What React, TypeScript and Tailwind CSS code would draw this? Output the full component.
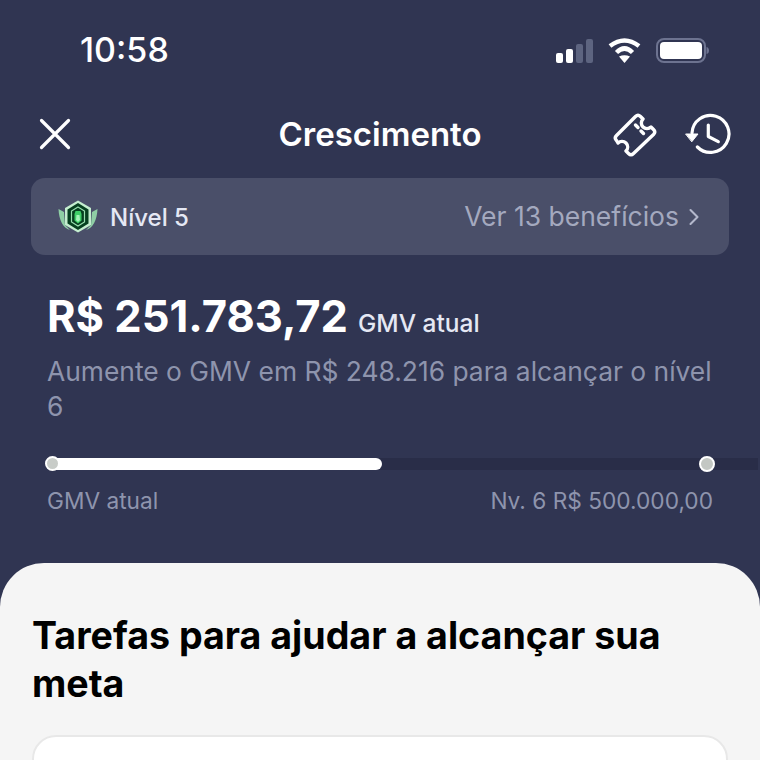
import React from 'react';
import { ChevronRight } from 'lucide-react';

const StatusIcons: React.FC = () => (
  <div className="flex items-center gap-[15px]">
    <svg width="37" height="25" viewBox="0 0 37 25">
      <rect x="0" y="15" width="7" height="10" rx="2" fill="#ffffff" />
      <rect x="10" y="11" width="7" height="14" rx="2" fill="#ffffff" />
      <rect x="20" y="6" width="7" height="19" rx="2" fill="#5d6480" />
      <rect x="30" y="1" width="7" height="24" rx="2" fill="#5d6480" />
    </svg>
    <svg width="33" height="25" viewBox="0 0 33 25" fill="none">
      <path d="M2 8Q16.500 -3 31 8" stroke="#fff" strokeWidth="4.500" />
      <path d="M8.500 14.500Q16.500 6.500 24.500 14.500" stroke="#fff" strokeWidth="4.500" />
      <path d="M11 18.500Q16.500 16 22 18.500L16.500 25Z" fill="#fff" />
    </svg>
    <svg width="53" height="25" viewBox="0 0 53 25" fill="none">
      <rect x="1" y="1" width="48" height="23" rx="7" stroke="#6d7390" strokeWidth="2" />
      <rect x="4" y="4" width="42" height="17" rx="4" fill="#fff" />
      <path d="M50.500 9C52.500 9.500 53 11 53 12.500S52.500 15.500 50.500 16Z" fill="#6d7390" />
    </svg>
  </div>
);

const CloseIcon: React.FC = () => (
  <svg width="32" height="32" viewBox="0 0 32 32" fill="none" stroke="#fff" strokeWidth="3.2" strokeLinecap="round">
    <path d="M2.500 2.500L29.500 29.500M29.500 2.500L2.500 29.500" />
  </svg>
);

const TicketIcon: React.FC = () => (
  <svg width="45" height="45" viewBox="0 0 45 45" fill="none" stroke="#fff" strokeWidth="3.4" strokeLinejoin="round" strokeLinecap="round">
    <path d="M22.500 4.500Q25 2 27.500 4.500L30 7A5.500 5.500 0 0 0 38 15L40.500 17.500Q43 20 40.500 22.500L20.500 41.500Q18 44 15.500 41.500L13 39A5.500 5.500 0 0 0 5 31L3.500 28.500Q1 26 3.500 23.500Z" />
    <path d="M22.500 13L25 15.500M28 19L30.500 21.500" />
  </svg>
);

const HistoryIcon: React.FC = () => (
  <svg width="46" height="44" viewBox="0 0 46 44" fill="none" stroke="#fff" strokeWidth="3.2" strokeLinecap="round" strokeLinejoin="round">
    <path d="M7 21A18.500 18.500 0 1 1 12.400 35" />
    <path d="M23.300 13V24.500L33.300 29.700" />
    <path d="M1 22H13L7 29.500Z" fill="#fff" strokeWidth="1" />
  </svg>
);

const LevelBadge: React.FC = () => (
  <svg width="40" height="34" viewBox="0 0 40 34">
    <path d="M0.500 9L6 12L7 25L12 30C5 28 1 20 0.500 9Z" fill="#8fcfa5" />
    <path d="M39.500 9L34 12L33 25L28 30C35 28 39 20 39.500 9Z" fill="#8fcfa5" />
    <path d="M20 .5L33 8V25L20 32.500L7 25V8Z" fill="#c4eecf" />
    <path d="M20 3L30.500 9.500V23.500L20 30L9.500 23.500V9.500Z" fill="#06401f" />
    <path d="M20 7L26.500 11V22L20 26L13.500 22V11Z" fill="none" stroke="#9adfb0" strokeWidth="1.2" />
    <path d="M17.500 11H22.500L23.500 14V20.500L20 23.500L16.500 20.500V14Z" fill="#3fcf68" />
    <path d="M18.500 15H21.500L22 20L20 22L18 20Z" fill="#a4f5b8" />
  </svg>
);

const App: React.FC = () => {
  return (
    <div className="h-[760px] w-[760px] overflow-hidden bg-[#303552] font-['Inter','Liberation_Sans',sans-serif] text-white">
      <div className="flex h-[100px] items-center justify-between pl-[80px] pr-[51px]">
        <span className="text-[34px] font-medium leading-none">10:58</span>
        <StatusIcons />
      </div>

      <div className="flex h-[68px] items-center justify-between pl-[39px] pr-[29px]">
        <CloseIcon />
        <h1 className="pl-[76px] text-[33px] font-semibold leading-none">Crescimento</h1>
        <div className="flex items-center gap-[27px]">
          <TicketIcon />
          <HistoryIcon />
        </div>
      </div>

      <div className="mx-[31px] mt-[10px] flex h-[77px] items-center justify-between rounded-[14px] bg-[#4a4f69] pl-[27px] pr-[20px]">
        <div className="flex items-center gap-[12px]">
          <LevelBadge />
          <span className="pt-[2px] text-[24px] font-medium leading-none text-[#e5e8f4]">Nível 5</span>
        </div>
        <div className="flex items-center text-[#a4a9bf]">
          <span className="text-[26.5px] leading-none">Ver 13 benefícios</span>
          <ChevronRight size={28} strokeWidth={1.8} className="mx-px text-[#b4b8cc]" />
        </div>
      </div>

      <div className="px-[47px] pt-[34px]">
        <div className="flex items-baseline gap-[10px]">
          <span className="text-[43.5px] font-bold leading-[54px]">R$ 251.783,72</span>
          <span className="text-[24.5px] font-medium leading-none text-[#e5e8f4]">GMV atual</span>
        </div>
        <p className="mt-[11px] text-[26.4px] leading-[35px] text-[#8e94ad]">
          Aumente o GMV em R$ 248.216 para alcançar o nível 6
        </p>
      </div>

      <div className="relative mt-[34px] ml-[46px] mr-[2px] h-[12px] rounded-l-full bg-[#292d48]">
        <div className="h-full w-[336px] rounded-full bg-white" />
        <div className="absolute left-[-1px] top-[-2px] h-[15px] w-[15px] rounded-full border-[2px] border-white bg-[#c8ccc8]" />
        <div className="absolute left-[653px] top-[-2px] h-[16px] w-[16px] rounded-full border-[2px] border-white bg-[#c3c7c3]" />
      </div>

      <div className="mt-[17px] flex items-center justify-between pl-[47px] pr-[47px] text-[22.7px] leading-[28px] text-[#8e94ad]">
        <span>GMV atual</span>
        <span>Nv. 6 R$ 500.000,00</span>
      </div>

      <div className="mt-[48px] h-[400px] rounded-t-[44px] bg-[#f5f5f5] px-[32px] pt-[49px]">
        <h2 className="text-[37.6px] font-bold leading-[48px] text-black">
          Tarefas para ajudar a alcançar sua meta
        </h2>
        <div className="mt-[27px] h-[100px] rounded-[24px] border-[2px] border-[#e8e8e8] bg-white" />
      </div>
    </div>
  );
};

export default App;
